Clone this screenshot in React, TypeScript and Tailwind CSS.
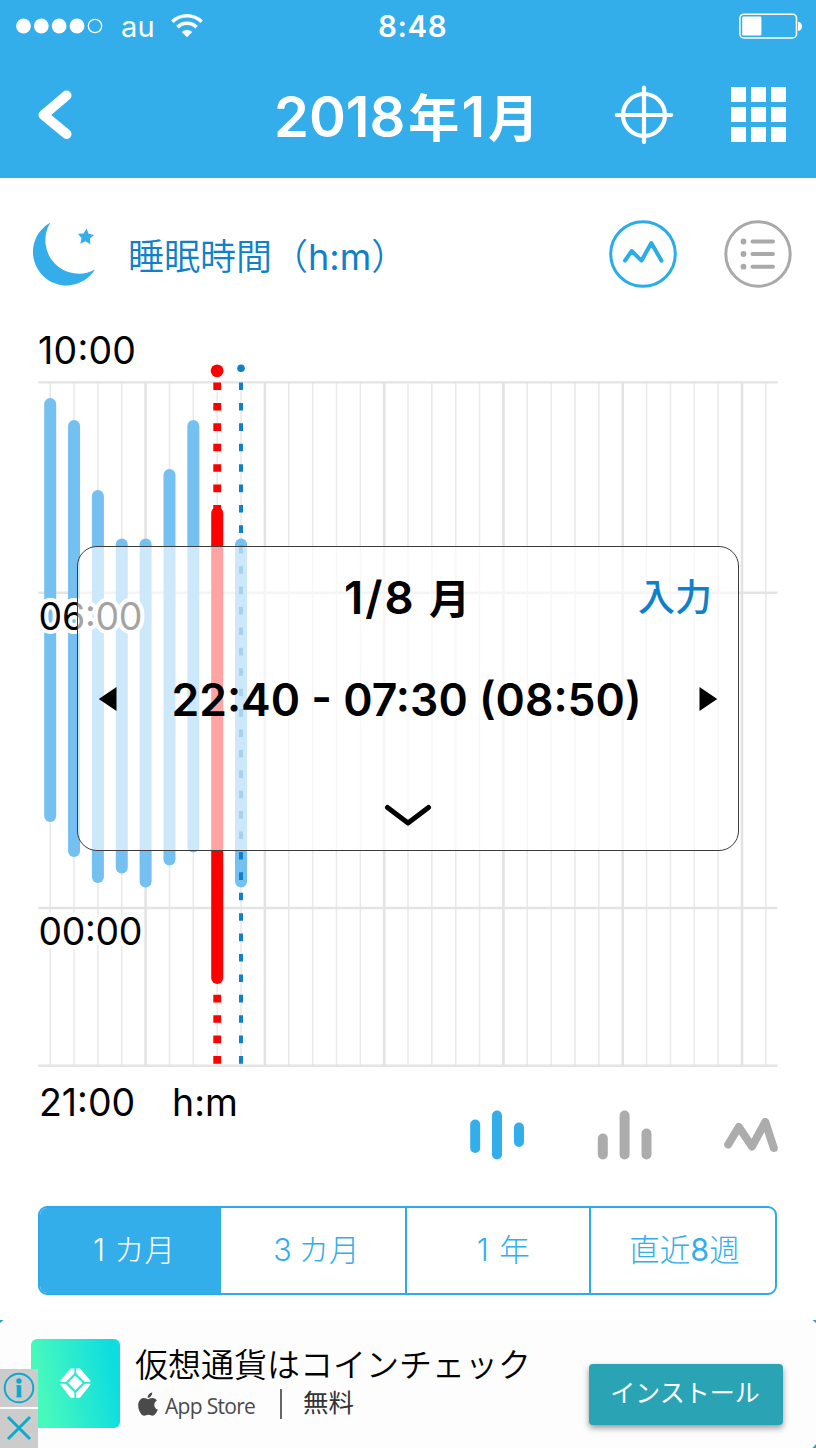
import React from 'react'

const STEP = 23.855
const X0 = 50.2
const dayX = (i: number) => X0 + STEP * i

const sleepBars = [
  { day: 0, top: 398, bottom: 822 },
  { day: 1, top: 420, bottom: 857 },
  { day: 2, top: 490, bottom: 883 },
  { day: 3, top: 538.5, bottom: 873.5 },
  { day: 4, top: 538.5, bottom: 887.5 },
  { day: 5, top: 469, bottom: 865.5 },
  { day: 6, top: 420, bottom: 852.5 },
  { day: 8, top: 538.5, bottom: 887.5 },
]

const days = Array.from({ length: 31 }, (_, i) => i)

function StatusBar() {
  return (
    <div className="flex h-[52px] items-center pl-4 pr-[13px] text-white">
      <div className="flex w-[362px] items-center">
        <svg width="88" height="16" viewBox="0 0 88 16" fill="white">
          <circle cx="7.5" cy="8" r="7.4" />
          <circle cx="25.3" cy="8" r="7.4" />
          <circle cx="43.1" cy="8" r="7.4" />
          <circle cx="61" cy="8" r="7.4" />
          <circle cx="79" cy="8" r="6.7" fill="none" stroke="white" strokeWidth="1.3" />
        </svg>
        <span className="ml-[17px] text-[29px] leading-none tracking-[0.3px]">au</span>
        <svg className="ml-[16px]" width="32" height="24" viewBox="0 0 32 24" fill="none" stroke="white" strokeWidth="3.6">
          <path d="M1.4 7.8C9.5-.2 22.5-.2 30.6 7.8" />
          <path d="M6.4 13.1c5.4-5.2 13.8-5.2 19.2 0" />
          <path d="M16 23.2l-5.2-5.2c2.9-2.7 7.5-2.7 10.4 0z" fill="white" stroke="none" />
        </svg>
      </div>
      <span className="pt-[2px] text-[29.5px] font-semibold leading-none tracking-[0.6px]">8:48</span>
      <svg className="ml-auto" width="64" height="26" viewBox="0 0 64 26">
        <rect x="0.9" y="1.2" width="56.6" height="23.8" rx="4" fill="none" stroke="white" strokeWidth="1.5" />
        <rect x="3.2" y="3.6" width="19.2" height="19" rx="1.4" fill="white" />
        <path d="M59 8.7c5.3 0 5.3 9.2 0 9.2z" fill="white" />
      </svg>
    </div>
  )
}

function NavBar() {
  return (
    <div className="flex h-[126px] items-center pb-[2px] pl-[36px] pr-[30px] text-white">
      <svg width="38" height="52" viewBox="0 0 38 52" fill="none" stroke="white" strokeWidth="10" strokeLinecap="round" strokeLinejoin="round">
        <path d="M30.5 7.5L7.5 27L30.5 46" />
      </svg>
      <h1 className="ml-[200px] w-[280px] whitespace-nowrap pt-[5px] text-[56px] font-semibold leading-none">
        <span>2018</span>
        <span className="ml-[3px] text-[51px]">年</span>
        <span className="ml-[2px]">1</span>
        <span className="ml-[3px] text-[51px]">月</span>
      </h1>
      <svg className="ml-[60px]" width="60" height="60" viewBox="0 0 60 60" fill="none" stroke="white" strokeWidth="4.2" strokeLinecap="round">
        <circle cx="30" cy="31" r="21" />
        <path d="M30 3.5V58M2.8 31H57.2" />
      </svg>
      <div className="ml-auto grid grid-cols-[15px_15px_15px] grid-rows-[15px_15px_15px] gap-[5px]">
        {days.slice(0, 9).map((i) => (
          <div key={i} className="bg-white" />
        ))}
      </div>
    </div>
  )
}

function Heading() {
  return (
    <div className="flex h-[142px] items-center pl-[30px] pr-[24px] pt-[10px]">
      <svg width="68" height="68" viewBox="0 0 68 68" fill="#34aeea">
        <path d="M20.5 2.500A33.500 33.500 0 1 0 65 49.500A33.400 33.400 0 0 1 20.500 2.500z" />
        <path d="M56.500 8.500L58.600 13.800L64 15L59.900 18.600L60.300 24.300L55.500 21.300L50.300 23.700L51.500 18L47.900 13.800L53.600 13.400z" />
      </svg>
      <h2 className="ml-[30px] whitespace-nowrap pt-[6px] text-[36px] font-[350] leading-none text-[#0f80ca]">
        睡眠時間（<span className="font-normal">h:m</span>）
      </h2>
      <svg className="ml-auto" width="68" height="68" viewBox="0 0 68 68" fill="none" stroke="#2aace9" strokeWidth="3" strokeLinecap="round" strokeLinejoin="round">
        <circle cx="34" cy="34" r="32.3" />
        <path d="M16 40.7L22.7 31L32.5 40.7L42.3 23L52.5 40.7" strokeWidth="4" />
      </svg>
      <svg className="ml-[47px]" width="68" height="68" viewBox="0 0 68 68" fill="none" stroke="#a9a9a9" strokeWidth="4" strokeLinecap="round">
        <circle cx="34" cy="34" r="32.2" strokeWidth="3" />
        <path d="M28.5 21.5H49M28.5 34H49M28.5 46.7H49" />
        <g fill="#a9a9a9" stroke="none">
          <circle cx="19.5" cy="21.5" r="2.9" />
          <circle cx="19.5" cy="34" r="2.9" />
          <circle cx="19.5" cy="46.7" r="2.9" />
        </g>
      </svg>
    </div>
  )
}

function AxisLabel({ x, y, w, children }: { x: number; y: number; w: number; children: string }) {
  return (
    <text
      x={x}
      y={y}
      textLength={w}
      className="fill-black stroke-white text-[37.5px]"
      strokeWidth="8"
      strokeLinejoin="round"
      paintOrder="stroke"
    >
      {children}
    </text>
  )
}

function SleepChart() {
  return (
    <svg className="block" width="816" height="780" viewBox="0 320 816 780">
      {days.map((i) => (
        <path
          key={i}
          d={`M${dayX(i)} 382V1065`}
          stroke={i % 5 === 4 ? '#e3e3e3' : '#e9e9e9'}
          strokeWidth={i % 5 === 4 ? 2.6 : 1.5}
        />
      ))}
      <path d="M38.3 382.4H777.5M38.3 592.7H777.5M38.3 908H777.5M38.3 1065.7H777.5" stroke="#e4e4e4" strokeWidth="2.4" />
      {sleepBars.map((b) => (
        <rect key={b.day} x={dayX(b.day) - 6} y={b.top} width="12" height={b.bottom - b.top} rx="6" fill="#74c0f0" />
      ))}
      <path d="M217.2 382.5V1065" stroke="#f00" strokeWidth="7.8" strokeDasharray="7.6 12.81" />
      <rect x="211.2" y="507" width="12" height="477" rx="6" fill="#f00" />
      <circle cx="217.1" cy="370.8" r="6.4" fill="#f00" />
      <path d="M241 382.5V1065" stroke="#1081c8" strokeWidth="4" strokeDasharray="7.6 12.81" />
      <circle cx="241" cy="368.3" r="3.8" fill="#1081c8" />
      <AxisLabel x={38} y={363.6} w={98}>10:00</AxisLabel>
      <AxisLabel x={38.5} y={630} w={104}>06:00</AxisLabel>
      <AxisLabel x={38.5} y={944.8} w={104}>00:00</AxisLabel>
    </svg>
  )
}

function DayPanel() {
  return (
    <div className="absolute left-[77px] top-[226px] flex h-[305px] w-[662px] flex-col rounded-[20px] border-[1.3px] border-[#3c3c3c] bg-white/64">
      <div className="flex h-[100px] items-center">
        <span className="ml-[266px] whitespace-nowrap pt-[2px] text-[45.5px] font-semibold leading-none tracking-[2px]">
          1/8 <span className="text-[41px]">月</span>
        </span>
        <span className="ml-auto mr-[26px] text-[37px] font-medium leading-none text-[#0f80ca]">入力</span>
      </div>
      <div className="flex h-[104px] items-center justify-between px-[20px]">
        <svg width="19" height="24" viewBox="0 0 19 24"><path d="M18.5 0V24L.8 12z" /></svg>
        <span className="-ml-[3px] whitespace-nowrap pt-[2px] text-[44.5px] font-semibold leading-none">22:40 - 07:30 (08:50)</span>
        <svg width="19" height="24" viewBox="0 0 19 24"><path d="M.5 0V24L18.2 12z" /></svg>
      </div>
      <div className="flex flex-1 justify-center pt-[52px]">
        <svg width="48" height="26" viewBox="0 0 48 26" fill="none" stroke="black" strokeWidth="5" strokeLinecap="round" strokeLinejoin="round">
          <path d="M3.5 4.5L24 20L44.5 4.5" />
        </svg>
      </div>
    </div>
  )
}

function ChartFooter() {
  return (
    <div className="flex h-[106px] items-start pl-[39px] pr-[38px]">
      <div className="-mt-[16px] flex text-[37.5px] leading-none">
        <span className="w-[133px]">21:00</span>
        <span>h:m</span>
      </div>
      <svg className="ml-auto mt-[8px]" width="312" height="54" viewBox="468 1108 312 54" fill="none" strokeWidth="10" strokeLinecap="round" strokeLinejoin="round">
        <path d="M477.2 1124.5V1148M499 1115.5V1154.5M521 1127.5V1142" stroke="#34aeea" />
        <path d="M604.8 1138.5V1154.5M626.6 1115.5V1154.5M648.5 1133.5V1154.5" stroke="#acacac" />
        <path d="M730.2 1144.5L740.8 1127L754 1146.5L767.300 1122L775.800 1148" stroke="#acacac" strokeWidth="8" />
      </svg>
    </div>
  )
}

function RangeTabs() {
  return (
    <div className="ml-[38px] flex h-[89px] w-[739px] overflow-hidden rounded-[9px] border-2 border-[#2aace9] text-[30.5px] font-light leading-none text-[#34aeea]">
      <button className="flex w-[181px] items-center justify-center bg-[#34aeea] pr-[2px] text-white">
        <span className="w-[30px] text-center">1</span>カ月
      </button>
      <button className="flex w-[186px] items-center justify-center border-r-2 border-[#2aace9]">
        <span className="w-[32px] text-center">3</span>カ月
      </button>
      <button className="flex w-[184px] items-center justify-center border-r-2 border-[#2aace9]">
        <span className="w-[33px] text-center">1</span>年
      </button>
      <button className="flex flex-1 items-center justify-center pl-[3px]">
        直近<span className="font-normal">8</span>週
      </button>
    </div>
  )
}

function AdBanner() {
  return (
    <div className="relative mt-[25px] flex h-[128px] items-start overflow-hidden bg-[#fdfdfd]">
      <svg className="absolute left-0 top-0" width="816" height="128" viewBox="0 0 816 128" fill="#2aa3b5">
        <path d="M0 0H3.5L0 3zM816 0H812.5L816 3zM816 124V128H812.5z" />
      </svg>
      <svg className="ml-[31px] mt-[19px] shrink-0" width="89" height="89" viewBox="0 0 89 89">
        <defs>
          <linearGradient id="coin" x1="0" y1="0.6" x2="1" y2="0.4">
            <stop offset="0.1" stopColor="#48f9bd" />
            <stop offset="0.95" stopColor="#0edddf" />
          </linearGradient>
        </defs>
        <rect width="89" height="89" rx="6" fill="url(#coin)" />
        <path d="M39.500 29.500H49L59.300 41.500V45.800L49 58.800H39.500L29.500 45.800V41.500z" fill="white" />
        <path d="M44.300 29V60M28 43.900H61" stroke="#2bead0" strokeWidth="1.800" />
        <path d="M44.300 35L53.200 43.900L44.300 52.800L35.400 43.900z" fill="white" stroke="#2bead0" strokeWidth="2.200" />
      </svg>
      <div className="ml-[15px] mt-[27px] flex w-[454px] flex-col">
        <span className="whitespace-nowrap text-[33px] font-[350] leading-[36px] text-black">仮想通貨はコインチェック</span>
        <div className="mt-[4px] flex items-center leading-[30px] text-[#4a4a4a]">
          <svg className="ml-[3px] mt-[1px]" width="20" height="25" viewBox="0 0 20 25" fill="#4a4a4a">
            <path d="M14.200.5c.2 2.700-2 5.300-4.500 5.400C9.400 3.300 11.700.8 14.200.5zM10 7.200c1 0 2.300-1.200 4.600-1.200 1.800 0 3.400 1 4.300 2.400-3.900 2.300-3.300 7.600.9 9.200-.9 2.600-3 6.200-5.200 6.200-1.600 0-2.100-1-4.200-1s-2.700 1-4.200 1C3.600 23.800.2 18.600.2 13.500.200 8.700 3.100 6.100 6 6.100c1.900 0 3.200 1.100 4 1.100z" />
          </svg>
          <span className="ml-[7px] mt-[4px] w-[91px] whitespace-nowrap font-['Open_Sans',sans-serif] text-[21px] font-medium tracking-[-0.700px]">
            App Store
          </span>
          <span className="ml-[24px] h-[30px] w-[2px] bg-[#666]" />
          <span className="ml-[21px] -mt-[2px] text-[25.500px] text-[#333]">無料</span>
        </div>
      </div>
      <button className="mt-[44px] h-[61px] w-[194px] rounded-[4px] bg-[#2aa3b5] pb-[2px] pr-[2px] text-[25px] leading-none text-white shadow-[0_3px_6px_rgba(0,0,0,0.4)]">
        インストール
      </button>
      <div className="absolute left-0 top-[49px] flex flex-col gap-[2px] bg-white">
        <svg className="bg-[#ccc]" width="38" height="38" viewBox="0 0 38 38" fill="none" stroke="#0fa9cc" strokeWidth="2">
          <circle cx="19" cy="19" r="14.300" />
          <circle cx="19" cy="12" r="2.700" fill="#0fa9cc" stroke="none" />
          <path d="M16.500 17H20M16.500 27.500H21.500" strokeWidth="1.500" />
          <path d="M19 16.300V28.200" strokeWidth="4.500" />
        </svg>
        <svg className="bg-[#ccc]" width="38" height="39" viewBox="0 0 38 39" fill="none" stroke="#0fa9cc" strokeWidth="3">
          <path d="M8 8L30 30M30 8L8 30" />
        </svg>
      </div>
    </div>
  )
}

export default function App() {
  return (
    <main className="flex h-[1448px] w-[816px] flex-col overflow-hidden bg-white font-['Inter','Noto_Sans_CJK_JP',sans-serif] text-black">
      <header className="h-[178px] shrink-0 bg-[#34aeea]">
        <StatusBar />
        <NavBar />
      </header>
      <Heading />
      <section className="relative h-[780px] shrink-0">
        <SleepChart />
        <DayPanel />
      </section>
      <ChartFooter />
      <RangeTabs />
      <AdBanner />
    </main>
  )
}
